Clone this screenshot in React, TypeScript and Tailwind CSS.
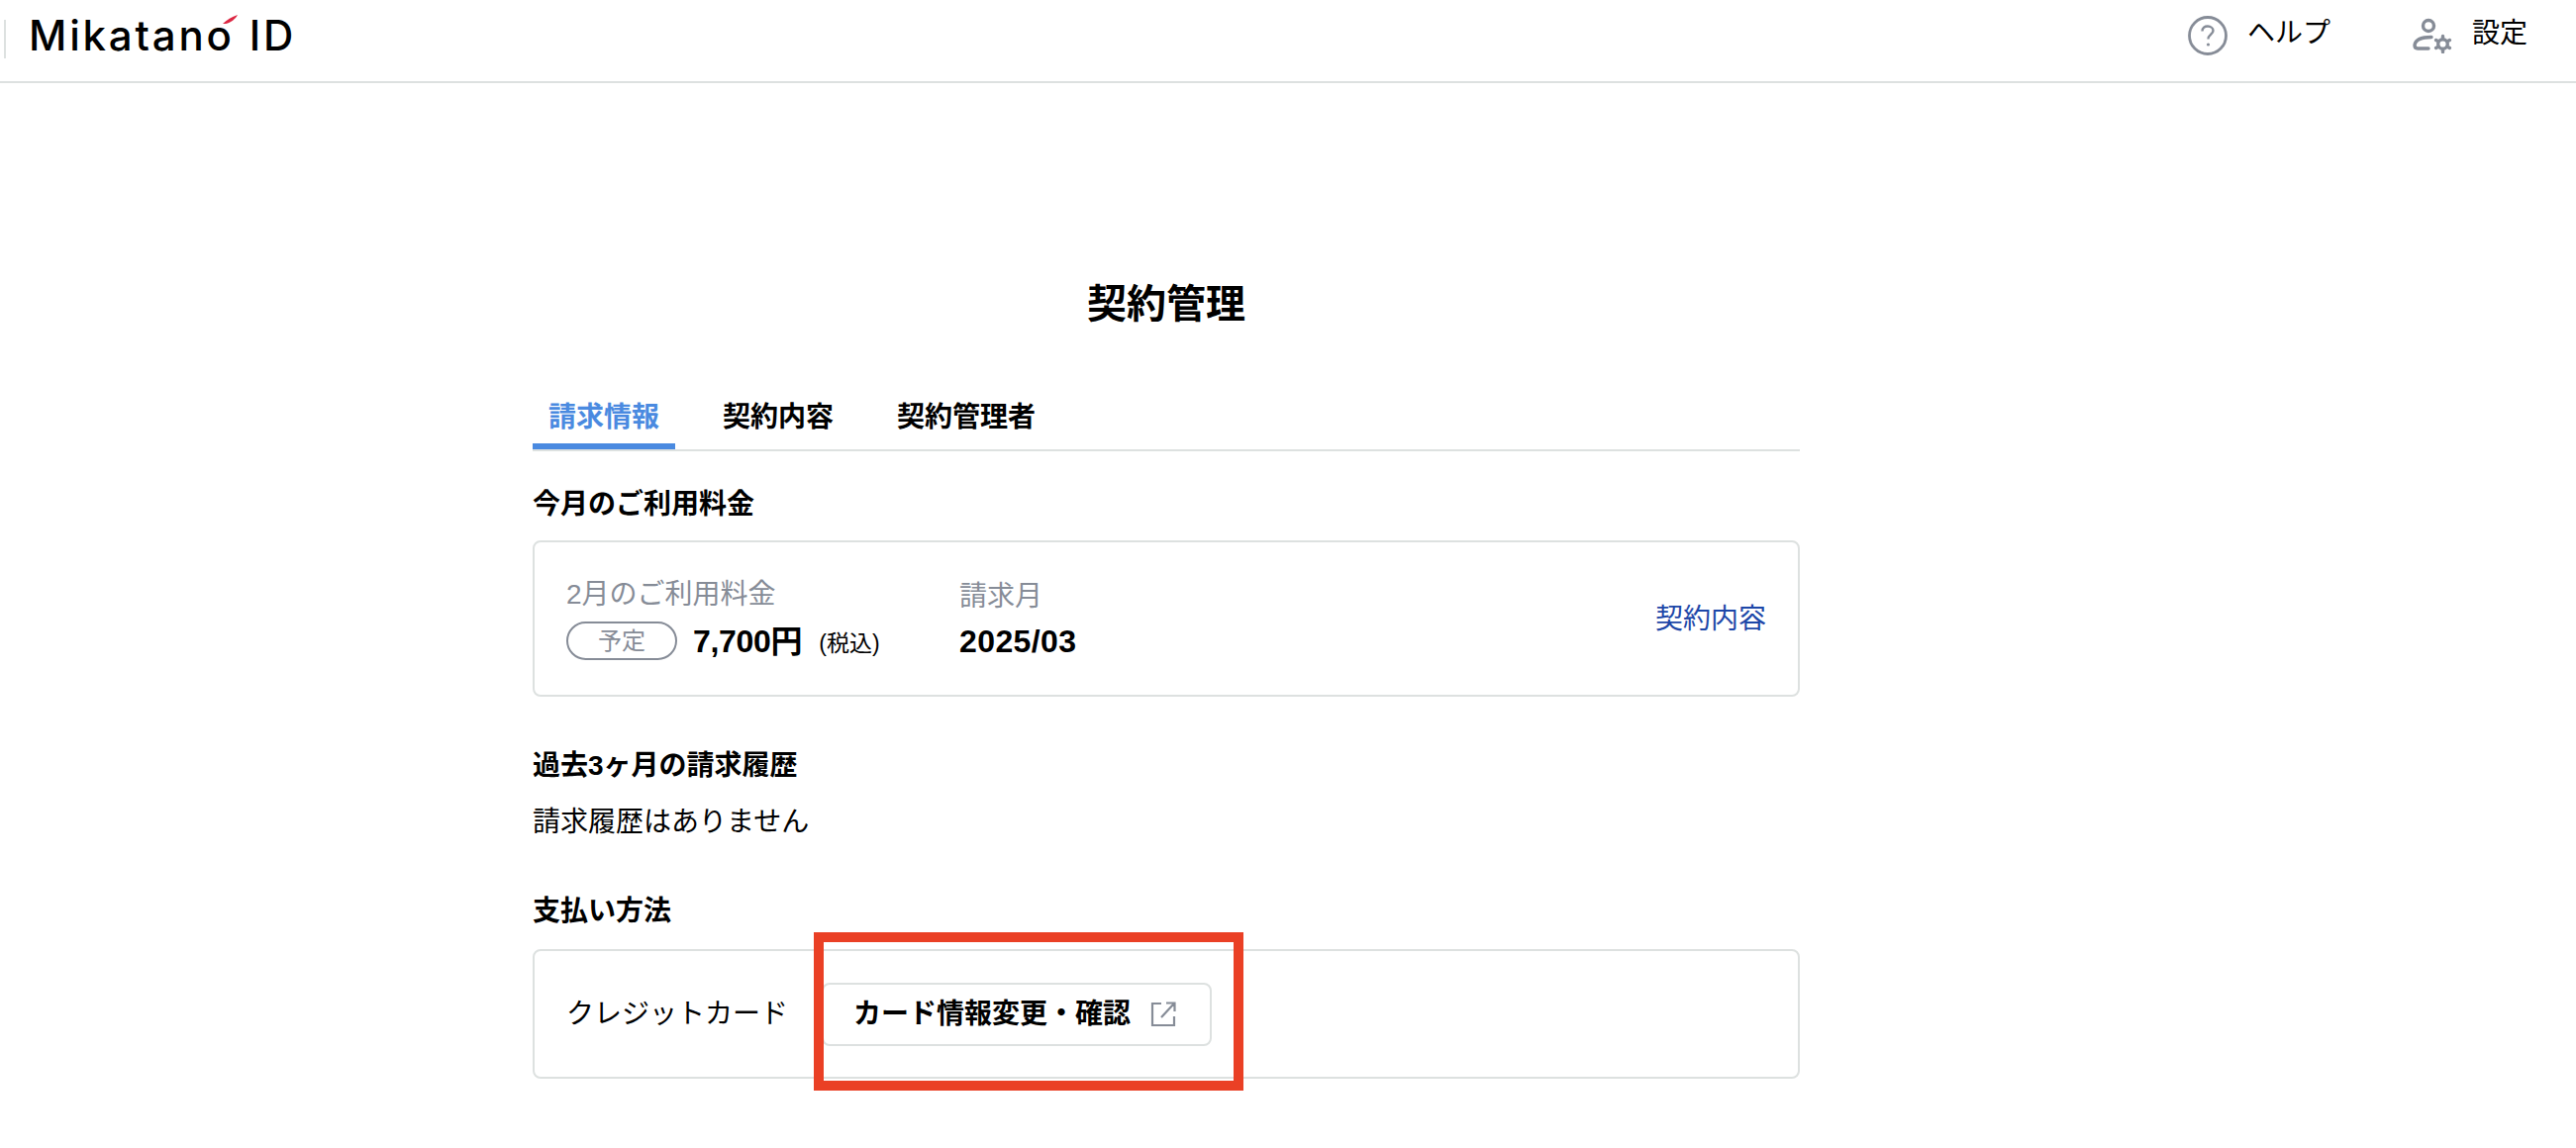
export default function App() {
  return (
    <div className="relative h-[1160px] w-[2602px] overflow-hidden bg-white font-['Liberation_Sans','Noto_Sans_CJK_JP',sans-serif] text-[28px] leading-[40px] text-black">
      {/* Header */}
      <header className="flex h-[84px] items-center border-b-2 border-[#dde1e0] pb-[2px]">
        <div className="ml-[4px] mb-[2px] h-[39px] w-[2px] bg-[#dde1e0]" />
        <div className="relative ml-[23px] mb-[8px] flex items-center gap-[15px] font-['Inter',sans-serif] text-[42px] font-medium leading-[48px] tracking-[2.8px]">
          <span>Mikatano</span>
          <span>ID</span>
          <svg className="absolute left-[196px] top-[3px]" width="16" height="10" viewBox="0 0 16 10">
            <path d="M0 9 C4 5 9 2 15 0 C13 4 8 8 3 9 Z" fill="#dc2743" />
          </svg>
        </div>
        <div className="ml-auto mr-[49px] mb-[8px] flex items-center">
          <svg width="40" height="40" viewBox="0 0 40 40" fill="none" stroke="#868c97">
            <circle cx="20" cy="20" r="18.5" strokeWidth="2.8" />
            <path d="M14.5 15.5 C14.5 12 17 10.5 20 10.5 C23 10.5 25.5 12.5 25.5 15 C25.5 18.5 20.5 19 20.5 23.5" strokeWidth="2.4" />
            <circle cx="20.5" cy="29" r="1.6" fill="#868c97" stroke="none" />
          </svg>
          <span className="ml-[20px] mb-[4px]">ヘルプ</span>
          <svg className="ml-[83px]" width="40" height="36" viewBox="0 0 40 36" fill="none" stroke="#868c97" strokeWidth="3.4" strokeLinecap="round">
            <circle cx="16" cy="8" r="5.5" />
            <path d="M19 19.5 C12 19.5 3 21 2 27.5 C2 30 3 31 5 31 H16" />
            <circle cx="30.5" cy="26.5" r="4.8" />
            <path d="M30.5 18.5 V20 M30.5 33 V34.5 M23.6 22.5 L24.9 23.2 M36.1 29.8 L37.4 30.5 M23.6 30.5 L24.9 29.8 M36.1 23.2 L37.4 22.5" strokeWidth="3.4" />
          </svg>
          <span className="ml-[20px] mb-[4px]">設定</span>
        </div>
      </header>

      {/* Main */}
      <main className="ml-[538px] w-[1280px]">
        <h1 className="mt-[199px] text-center text-[40px] font-bold leading-[48px]">契約管理</h1>

        <nav className="mt-[63px] flex h-[62px] gap-[32px] border-b-2 border-[#dde1e0] font-bold">
          <div className="h-[60px] border-b-[6px] border-[#4a8ae0] px-[16px] pt-[8px] text-[#4a8ae0]">請求情報</div>
          <div className="px-[16px] pt-[8px]">契約内容</div>
          <div className="px-[16px] pt-[8px]">契約管理者</div>
        </nav>

        <h2 className="mt-[34px] font-bold">今月のご利用料金</h2>
        <section className="mt-[16px] flex h-[158px] items-center rounded-[8px] border-2 border-[#dde1e0] pl-[32px] pr-[32px]">
          <div className="w-[397px]">
            <p className="text-[#868c97]">2月のご利用料金</p>
            <div className="mt-[5px] flex items-center">
              <span className="flex h-[39px] w-[112px] items-center justify-center rounded-full border-2 border-[#868c97] text-[24px] text-[#868c97]">予定</span>
              <span className="ml-[16px] text-[32px] font-bold tracking-[-0.3px]">7,700円</span>
              <span className="ml-[17px] mt-[4px] text-[23px]">(税込)</span>
            </div>
          </div>
          <div>
            <p className="text-[#868c97]">請求月</p>
            <p className="mt-[5px] text-[32px] font-bold tracking-[0.4px]">2025/03</p>
          </div>
          <a className="ml-auto mt-[2px] text-[#1d47a8]">契約内容</a>
        </section>

        <h2 className="mt-[50px] font-bold">過去3ヶ月の請求履歴</h2>
        <p className="mt-[17px]">請求履歴はありません</p>

        <h2 className="mt-[50px] font-bold">支払い方法</h2>
        <section className="mt-[18px] flex h-[131px] items-center rounded-[8px] border-2 border-[#dde1e0] pl-[32px]">
          <span>クレジットカード</span>
          <button className="ml-[34px] flex h-[64px] items-center rounded-[8px] border-2 border-[#dde1e0] pl-[30px] pr-[34px] font-bold">
            カード情報変更・確認
            <svg className="ml-[20px]" width="26" height="26" viewBox="0 0 26 26" fill="none" stroke="#868c97" strokeWidth="2.2">
              <path d="M11 2 H2 V24 H24 V15" />
              <path d="M11 16 L23.5 2.5 M16 1.5 H24.5 V10" />
            </svg>
          </button>
        </section>
      </main>

      {/* Annotation box */}
      <div className="absolute left-[822px] top-[942px] h-[160px] w-[434px] border-[10px] border-[#ea4025]" />
    </div>
  );
}
